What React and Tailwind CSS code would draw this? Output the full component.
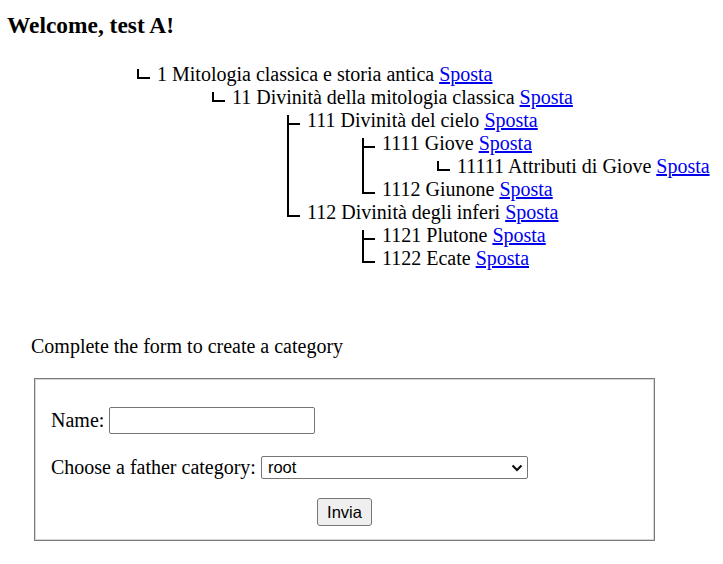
import React from "react";

const tree = [
  {
    code: "1",
    name: "Mitologia classica e storia antica",
    children: [
      {
        code: "11",
        name: "Divinità della mitologia classica",
        children: [
          {
            code: "111",
            name: "Divinità del cielo",
            children: [
              {
                code: "1111",
                name: "Giove",
                children: [{ code: "11111", name: "Attributi di Giove", children: [] }],
              },
              { code: "1112", name: "Giunone", children: [] },
            ],
          },
          {
            code: "112",
            name: "Divinità degli inferi",
            children: [
              { code: "1121", name: "Plutone", children: [] },
              { code: "1122", name: "Ecate", children: [] },
            ],
          },
        ],
      },
    ],
  },
];

const verticalClass = (first, last) => {
  if (first && last) return "absolute left-0 top-[6px] h-[10px] w-[2px] bg-black";
  if (first) return "absolute left-0 top-[6px] bottom-0 w-[2px] bg-black";
  if (last) return "absolute left-0 top-0 h-[16px] w-[2px] bg-black";
  return "absolute left-0 top-0 bottom-0 w-[2px] bg-black";
};

const TreeList = ({ nodes, className }) => (
  <ul className={className}>
    {nodes.map((node, i) => (
      <li key={node.code} className="relative pl-[20px]">
        {/* connector lines */}
        <span className={verticalClass(i === 0, i === nodes.length - 1)} />
        <span className="absolute left-0 top-[14px] h-[2px] w-[13px] bg-black" />
        <div className="leading-[23px] whitespace-nowrap">
          {node.code} {node.name}{" "}
          <a href="#" className="text-[#0000ee] underline">
            Sposta
          </a>
        </div>
        {node.children.length > 0 && <TreeList nodes={node.children} className="ml-[55px]" />}
      </li>
    ))}
  </ul>
);

export default function App() {
  return (
    <div className="min-h-screen bg-white text-black font-['Liberation_Serif','Times_New_Roman',serif] text-[20px]">
      <h3 className="pt-[12px] pl-[7px] text-[23.4px] leading-[27px] font-bold">Welcome, test A!</h3>

      {/* Category tree */}
      <TreeList nodes={tree} className="mt-[24px] ml-[137px]" />

      <p className="mt-[65px] pl-[31px] leading-[23px]">Complete the form to create a category</p>

      <form className="mt-[20px] ml-[34px] w-[621px] h-[163px] border border-[#7b7b7b]">
        <div className="h-full border border-[#d6d6d6] px-[15px] pt-[27px] flex flex-col">
          <div className="flex items-center h-[27px]">
            <label className="leading-[23px]">Name:</label>
            <input
              type="text"
              className="block ml-[5px] w-[206px] h-[27px] border border-[#767676] rounded-[2px] bg-white px-1 text-[16px] font-['Liberation_Sans',Arial,sans-serif]"
            />
          </div>
          <div className="flex items-center h-[23px] mt-[22px]">
            <label className="leading-[23px]">Choose a father category:</label>
            <div className="relative ml-[5px] h-[23px]">
              <select className="block appearance-none w-[267px] h-[23px] border border-[#767676] rounded-[2px] bg-white pl-[6px] text-[16.5px] leading-[21px] font-['Liberation_Sans',Arial,sans-serif]">
                <option>root</option>
              </select>
              <svg
                className="absolute right-[5px] top-[8px] pointer-events-none"
                width="12"
                height="8"
                viewBox="0 0 12 8"
                fill="none"
              >
                <path d="M1.5 1.5 L6 6 L10.5 1.5" stroke="#111" strokeWidth="2.2" />
              </svg>
            </div>
          </div>
          <div className="flex justify-center mt-[19px]">
            <button
              type="button"
              className="w-[55px] h-[28px] bg-[#efefef] border border-[#767676] rounded-[3px] text-[16.5px] font-['Liberation_Sans',Arial,sans-serif]"
            >
              Invia
            </button>
          </div>
        </div>
      </form>
    </div>
  );
}
